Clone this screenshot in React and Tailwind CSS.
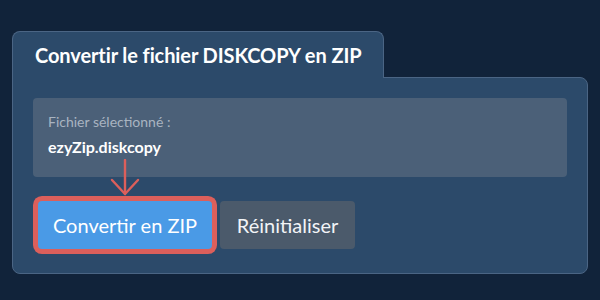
export default function App() {
  return (
    <div className="w-[600px] h-[300px] bg-[#11233a] pt-[31px] px-3 font-['Lato','Noto_Sans',sans-serif]">
      {/* Onglet */}
      <div className="relative z-10 -mb-px w-[372px] h-[47px] bg-[#2c4a6a] border border-b-0 border-[#4b6584] rounded-t-lg pl-[22px] flex items-center">
        <h1 className="text-[20px] font-bold text-white tracking-[-0.1px]">
          Convertir le fichier DISKCOPY en ZIP
        </h1>
      </div>

      {/* Corps */}
      <div className="bg-[#2c4a6a] border border-[#4b6584] rounded-b-lg rounded-tr-lg px-5 pt-5 pb-6">
        <div className="bg-[#4b6078] rounded h-[79px] pl-[15px] pt-[17px]">
          <p className="text-[14px] text-[#a9b4c1] leading-[14px]">Fichier sélectionné :</p>
          <p className="mt-[10px] text-[16px] font-bold text-white leading-[16px]">ezyZip.diskcopy</p>
        </div>

        <div className="flex gap-2 mt-6 pl-[5px]">
          <div className="relative">
            <svg
              className="absolute left-1/2 -translate-x-1/2 bottom-[52px]"
              width="30"
              height="38"
              viewBox="0 0 30 38"
              fill="none"
              stroke="#dc5f5b"
              strokeWidth="2.4"
              strokeLinecap="round"
              strokeLinejoin="round"
            >
              <path d="M15 1 V35" />
              <path d="M2 21 L15 35 L28 21" />
            </svg>
            <button className="w-[174px] h-12 bg-[#4a9ae6] rounded-sm ring-[5px] ring-[#dc5f5b] text-[20px] text-white">
              Convertir en ZIP
            </button>
          </div>
          <button className="w-[135px] h-12 bg-[#4b5a6b] rounded text-[20px] text-[#f2f4f7]">
            Réinitialiser
          </button>
        </div>
      </div>
    </div>
  );
}
